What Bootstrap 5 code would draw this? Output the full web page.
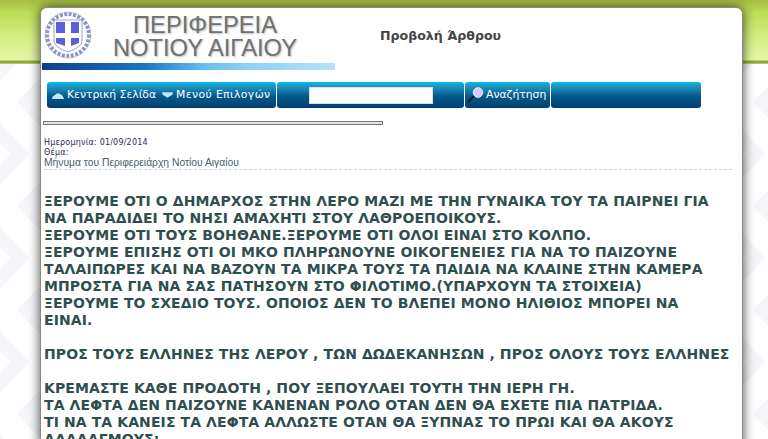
<!DOCTYPE html>
<html lang="el">
<head>
    <meta charset="UTF-8">
    <meta name="viewport" content="width=device-width, initial-scale=1.0">
    <title>Προβολή Άρθρου</title>
    <link rel="stylesheet" href="https://cdn.jsdelivr.net/npm/bootstrap@5.3.0/dist/css/bootstrap.min.css">
    <style>
        html, body { height: 439px; overflow: hidden; }
        body {
            font-family: "DejaVu Sans", sans-serif;
            background-color: #fff;
            background-image:
                linear-gradient(#a6bd42 0, #bcdc56 12px, #d4ec80 35px, #e6f6a8 60px, #8fae2a 61px, #8fae2a 63px, #d8d8d0 64px),
                url("data:image/svg+xml,%3Csvg xmlns='http://www.w3.org/2000/svg' width='736' height='104'%3E%3Cg fill='none' stroke='%23f5f5fa' stroke-width='14'%3E%3Cpath d='M-30 -52L20 0L-30 52'/%3E%3Cpath d='M-30 52L20 104L-30 156'/%3E%3C/g%3E%3Cpath d='M17 52L40 28V76Z' fill='%23f5f5fa'/%3E%3C/svg%3E");
            background-size: 100% 64px, 736px 104px;
            background-position: 0 0, 0 50px;
            background-repeat: no-repeat, repeat;
        }
        .page-panel {
            width: 703px;
            height: 460px;
            margin: 7px 0 0 40px;
            background: #fff;
            border: 1px solid #8a8a80;
            border-radius: 7px 7px 0 0;
            box-shadow: 0 0 12px rgba(0,0,0,.7);
            padding: 3px 0 0 3px;
        }
        .head-left { width: 291px; }
        .logo-line { height: 52px; }
        .site-name {
            font-family: "Liberation Sans", sans-serif;
            font-size: 23.7px;
            line-height: 23px;
            color: #6e7272;
            text-shadow: 1px 1px 2px #bbb;
            width: 210px;
            margin-left: 8px;
            padding-top: 3px;
        }
        .blue-strip {
            height: 7px;
            width: 293px;
            margin-left: -2px;
            background: linear-gradient(90deg, #0d3f8c 0, #1b74c4 35%, #67bdf0 55%, #8fd0f4 70%, #b5e2fa 100%);
        }
        .page-title {
            font-size: 12.6px;
            font-weight: 700;
            color: #444;
            margin: 16px 0 0 45px;
        }
        .menu-bar { margin: 12px 0 0 3px; gap: 1px; height: 26px; }
        .menu-cell {
            height: 26px;
            border-radius: 3px;
            background: linear-gradient(#00c4ee 0, #18a0cc 3px, #1a7fae 8px, #045a8c 14px, #003f70 100%);
            color: #fff;
            font-size: 10.8px;
            white-space: nowrap;
        }
        .cell-main { width: 229px; padding-left: 5px; gap: 6px; }
        .menu-link { gap: 3px; }
        .link-wide { letter-spacing: .4px; }
        .cell-input { width: 187px; padding-left: 32px; }
        .cell-input input { width: 124px; height: 17px; border: 1px solid #ddd; background: #fff; padding: 0; }
        .cell-search { width: 85px; padding-left: 2px; gap: 2px; }
        .cell-end { width: 150px; }
        .rule-line { width: 340px; height: 4px; margin: 13px 0 0 -1px; background: #e4e4e4; border: 1px solid #777; }
        .article-meta { font-size: 8px; line-height: 9.5px; color: #32285a; margin: 13px 0 0 0; letter-spacing: .2px; }
        .article-title {
            font-family: "Liberation Sans", sans-serif;
            font-size: 10.3px;
            line-height: 11px;
            color: #4a6068;
            border-bottom: 1px dashed #bcdcf0;
            margin: 0 10px 0 0;
            padding-bottom: 1px;
        }
        .article-text {
            font-size: 14px;
            letter-spacing: .1px;
            font-weight: 700;
            line-height: 17px;
            color: #2f4f4f;
            margin: 23px 0 0 0;
            white-space: nowrap;
        }
    </style>
</head>
<body>
<div class="page-panel">
    <div class="d-flex">
        <div class="head-left">
            <div class="logo-line d-flex">
                <svg width="48" height="48" viewBox="0 0 48 48" class="flex-shrink-0">
                    <circle cx="24" cy="24" r="21" fill="none" stroke="#8c96c4" stroke-width="4" stroke-dasharray="3 1.5"/>
                    <circle cx="24" cy="24" r="23" fill="none" stroke="#a8b0d4" stroke-width=".6"/>
                    <path d="M10 9h28v21q0 6-14 11q-14-5-14-11z" fill="#fff" stroke="#9aa4c8"/>
                    <path d="M12 11h9v11h-9zM27 11h8v11h-8zM12 27h9v8l-9-3zM27 27h8v5l-8 3z" fill="#5a60d8"/>
                </svg>
                <div class="site-name text-center">ΠΕΡΙΦΕΡΕΙΑ<br>ΝΟΤΙΟΥ ΑΙΓΑΙΟΥ</div>
            </div>
            <div class="blue-strip"></div>
        </div>
        <div class="page-title">Προβολή Άρθρου</div>
    </div>
    <div class="menu-bar d-flex">
        <div class="menu-cell cell-main d-flex align-items-center">
            <span class="menu-link d-flex align-items-center"><svg width="12" height="7" viewBox="0 0 12 7"><path d="M0 7q0-3 3-4q2-3 5-1q3 1 4 5z" fill="#bfe6f5"/></svg>Κεντρική Σελίδα</span>
            <span class="menu-link link-wide d-flex align-items-center"><svg width="11" height="6" viewBox="0 0 12 6"><path d="M0 0h12q0 3-3 4l-3 2l-3-2q-3-1-3-4z" fill="#bfe6f5"/></svg>Μενού Επιλογών</span>
        </div>
        <div class="menu-cell cell-input d-flex align-items-center"><input type="text" aria-label="Αναζήτηση"></div>
        <div class="menu-cell cell-search d-flex align-items-center">
            <svg width="17" height="16" viewBox="0 0 17 16"><path d="M1 15l6-6" stroke="#111" stroke-width="1.8"/><circle cx="11" cy="5.5" r="4.8" fill="#d4c8f8" stroke="#e8e8ff"/></svg>
            <span>Αναζήτηση</span>
        </div>
        <div class="menu-cell cell-end"></div>
    </div>
    <div class="rule-line"></div>
    <div class="article-meta">Ημερομηνία: 01/09/2014<br>Θέμα:</div>
    <div class="article-title">Μήνυμα του Περιφερειάρχη Νοτίου Αιγαίου</div>
    <div class="article-text">
        ΞΕΡΟΥΜΕ ΟΤΙ Ο ΔΗΜΑΡΧΟΣ ΣΤΗΝ ΛΕΡΟ ΜΑΖΙ ΜΕ ΤΗΝ ΓΥΝΑΙΚΑ ΤΟΥ ΤΑ ΠΑΙΡΝΕΙ ΓΙΑ<br>
        ΝΑ ΠΑΡΑΔΙΔΕΙ ΤΟ ΝΗΣΙ ΑΜΑΧΗΤΙ ΣΤΟΥ ΛΑΘΡΟΕΠΟΙΚΟΥΣ.<br>
        ΞΕΡΟΥΜΕ ΟΤΙ ΤΟΥΣ ΒΟΗΘΑΝΕ.ΞΕΡΟΥΜΕ ΟΤΙ ΟΛΟΙ ΕΙΝΑΙ ΣΤΟ ΚΟΛΠΟ.<br>
        ΞΕΡΟΥΜΕ ΕΠΙΣΗΣ ΟΤΙ ΟΙ ΜΚΟ ΠΛΗΡΩΝΟΥΝΕ ΟΙΚΟΓΕΝΕΙΕΣ ΓΙΑ ΝΑ ΤΟ ΠΑΙΖΟΥΝΕ<br>
        ΤΑΛΑΙΠΩΡΕΣ ΚΑΙ ΝΑ ΒΑΖΟΥΝ ΤΑ ΜΙΚΡΑ ΤΟΥΣ ΤΑ ΠΑΙΔΙΑ ΝΑ ΚΛΑΙΝΕ ΣΤΗΝ ΚΑΜΕΡΑ<br>
        ΜΠΡΟΣΤΑ ΓΙΑ ΝΑ ΣΑΣ ΠΑΤΗΣΟΥΝ ΣΤΟ ΦΙΛΟΤΙΜΟ.(ΥΠΑΡΧΟΥΝ ΤΑ ΣΤΟΙΧΕΙΑ)<br>
        ΞΕΡΟΥΜΕ ΤΟ ΣΧΕΔΙΟ ΤΟΥΣ. ΟΠΟΙΟΣ ΔΕΝ ΤΟ ΒΛΕΠΕΙ ΜΟΝΟ ΗΛΙΘΙΟΣ ΜΠΟΡΕΙ ΝΑ<br>
        ΕΙΝΑΙ.<br><br>
        ΠΡΟΣ ΤΟΥΣ ΕΛΛΗΝΕΣ ΤΗΣ ΛΕΡΟΥ , ΤΩΝ ΔΩΔΕΚΑΝΗΣΩΝ , ΠΡΟΣ ΟΛΟΥΣ ΤΟΥΣ ΕΛΛΗΝΕΣ<br><br>
        ΚΡΕΜΑΣΤΕ ΚΑΘΕ ΠΡΟΔΟΤΗ , ΠΟΥ ΞΕΠΟΥΛΑΕΙ ΤΟΥΤΗ ΤΗΝ ΙΕΡΗ ΓΗ.<br>
        ΤΑ ΛΕΦΤΑ ΔΕΝ ΠΑΙΖΟΥΝΕ ΚΑΝΕΝΑΝ ΡΟΛΟ ΟΤΑΝ ΔΕΝ ΘΑ ΕΧΕΤΕ ΠΙΑ ΠΑΤΡΙΔΑ.<br>
        ΤΙ ΝΑ ΤΑ ΚΑΝΕΙΣ ΤΑ ΛΕΦΤΑ ΑΛΛΩΣΤΕ ΟΤΑΝ ΘΑ ΞΥΠΝΑΣ ΤΟ ΠΡΩΙ ΚΑΙ ΘΑ ΑΚΟΥΣ<br>
        ΑΛΑΛΑΓΜΟΥΣ;
    </div>
</div>
<script src="https://cdn.jsdelivr.net/npm/bootstrap@5.3.0/dist/js/bootstrap.bundle.min.js"></script>
</body>
</html>
